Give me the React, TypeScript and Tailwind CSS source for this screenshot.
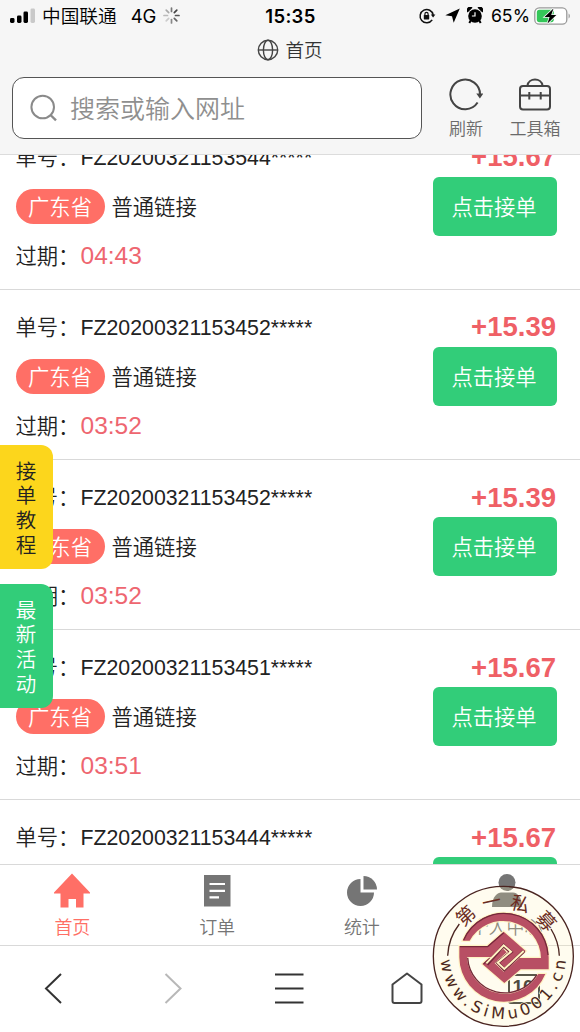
import { ReactNode } from 'react'

const orders = [
  { id: 1, no: 'FZ20200321153544*****', time: '04:43', price: '+15.67' },
  { id: 2, no: 'FZ20200321153452*****', time: '03:52', price: '+15.39' },
  { id: 3, no: 'FZ20200321153452*****', time: '03:52', price: '+15.39' },
  { id: 4, no: 'FZ20200321153451*****', time: '03:51', price: '+15.67' },
  { id: 5, no: 'FZ20200321153444*****', time: '03:44', price: '+15.67' },
]

function StatusBar() {
  return (
    <div className="h-8 grid grid-cols-3 items-center pl-[9px] pr-[8px] text-black font-['Inter','Noto_Sans_CJK_SC',sans-serif]">
      <div className="flex items-center whitespace-nowrap">
        <svg width="28" height="16" viewBox="0 0 28 16">
          <rect x="1" y="10" width="4.5" height="5" rx="1.4" />
          <rect x="8" y="7.5" width="4.5" height="7.5" rx="1.4" />
          <rect x="14.5" y="3.5" width="4.5" height="11.5" rx="1.4" />
          <rect x="21.5" y="0.5" width="4.5" height="14.5" rx="1.4" fill="#c9c9c9" />
        </svg>
        <span className="ml-[5px] pt-[2px] text-[18.7px] font-[350]">中国联通</span>
        <span className="ml-[14px] pt-px text-[18.5px] tracking-[-0.3px]">4G</span>
        <svg className="ml-[7px]" width="17" height="17" viewBox="-8.5 -8.5 17 17" strokeWidth="1.7" strokeLinecap="round">
          <path d="M0 -4V-7.5" stroke="#777" />
          <path d="M2.8 -2.8L5.3 -5.3" stroke="#444" />
          <path d="M4 0H7.5" stroke="#555" />
          <path d="M2.8 2.8L5.3 5.3" stroke="#666" />
          <path d="M0 4V7.5" stroke="#888" />
          <path d="M-2.8 2.8L-5.3 5.3" stroke="#ccc" />
          <path d="M-4 0H-7.5" stroke="#bbb" />
          <path d="M-2.8 -2.8L-5.3 -5.3" stroke="#aaa" />
        </svg>
      </div>
      <div className="pt-px text-center text-[18.5px] font-semibold tracking-[0.3px]">15:35</div>
      <div className="flex items-center justify-end whitespace-nowrap">
        <svg width="18" height="18" viewBox="0 0 18 18" fill="none" stroke="#111" strokeWidth="1.5">
          <path d="M14.2 12.8A6.6 6.6 0 1 1 15.2 8" />
          <path d="M12.8 7.5H17.4L15.1 10.6Z" fill="#111" stroke="none" />
          <rect x="5.8" y="8" width="5.4" height="4.4" rx="0.6" fill="#111" stroke="none" />
          <path d="M6.9 8.2V6.9a1.6 1.6 0 0 1 3.2 0V8.2" strokeWidth="1.2" />
        </svg>
        <svg className="ml-[9px]" width="15" height="15" viewBox="0 0 15 15">
          <path d="M14.8 0.5L0.3 7.3L7 8.2L8.7 14.8Z" />
        </svg>
        <svg className="ml-[7px]" width="16" height="17" viewBox="0 0 16 17">
          <circle cx="8" cy="9" r="6.8" />
          <path d="M0.6 5.5A3.3 3.3 0 0 1 5.5 0.7ZM15.4 5.5A3.3 3.3 0 0 0 10.5 0.7Z" />
          <path d="M4 13L2.3 16M12 13L13.7 16" stroke="#000" strokeWidth="2" />
          <path d="M8 5.2V9H4.9" fill="none" stroke="#fff" strokeWidth="1.2" />
        </svg>
        <span className="ml-[8px] pt-px text-[17.7px]">65%</span>
        <svg className="ml-[4px] mr-px" width="37" height="20" viewBox="0 0 37 20">
          <rect x="0.8" y="1.8" width="32" height="16.4" rx="4.5" fill="#fff" stroke="#999" strokeWidth="1.3" />
          <rect x="2.8" y="3.8" width="17" height="12.4" rx="2.6" fill="#34c759" />
          <path d="M34.5 7.5c2 .8 2 4.2 0 5Z" fill="#aaa" />
          <path d="M19.5 2.5L10.5 11H15.6L13.5 17.5L22.3 9H17.2Z" stroke="#f6f6f6" strokeWidth="1.6" paintOrder="stroke" />
        </svg>
      </div>
    </div>
  )
}

function Header() {
  return (
    <header className="h-[155px] shrink-0 bg-[#f6f6f6] border-b border-[#dcdcdc] flex flex-col">
      <StatusBar />
      <div className="h-9 flex items-center justify-center gap-[6px] text-[#333] text-[18.5px] font-[350]">
        <svg width="22" height="22" viewBox="0 0 22 22" fill="none" stroke="#444" strokeWidth="1.4">
          <circle cx="11" cy="11" r="9.7" />
          <ellipse cx="11" cy="11" rx="4.6" ry="9.7" />
          <path d="M1.3 11H20.7" />
        </svg>
        <span className="pt-px">首页</span>
      </div>
      <div className="flex items-start pl-3 pt-[9px]">
        <div className="w-[410px] h-[62px] rounded-[12px] border-[1.5px] border-[#555] bg-white flex items-center pl-[17px]">
          <svg width="28" height="28" viewBox="0 0 28 28" fill="none" stroke="#8a8a8a" strokeWidth="2">
            <circle cx="12.7" cy="13" r="11.3" />
            <path d="M20.5 21L26 26.3" strokeWidth="2.4" />
          </svg>
          <span className="ml-3 pt-[3px] text-[25px] font-[350] text-[#8f8f8f]">搜索或输入网址</span>
        </div>
        <div className="ml-[24px] w-10 flex flex-col items-center">
          <svg width="34" height="36" viewBox="0 0 34 36" fill="none" stroke="#444" strokeWidth="2">
            <path d="M28.6 25.5A14.8 14.8 0 1 1 31 18" />
            <path d="M27.3 16.500H34.3L30.9 21.6Z" fill="#444" stroke="none" />
          </svg>
          <span className="mt-[4px] text-[17px] leading-[25px] font-[350] text-[#6a6a6a]">刷新</span>
        </div>
        <div className="ml-[22px] w-[54px] flex flex-col items-center">
          <svg width="34" height="36" viewBox="0 0 34 36" fill="none" stroke="#444" strokeWidth="2">
            <rect x="2" y="9" width="30" height="23.5" rx="3" />
            <path d="M9.5 8.5C10.5 0.5 23.5 0.5 24.5 8.5M2 18.6H32M11.3 15V22.4M22.7 15V22.4" />
          </svg>
          <span className="mt-[4px] text-[17px] leading-[25px] font-[350] text-[#6a6a6a] whitespace-nowrap">工具箱</span>
        </div>
      </div>
    </header>
  )
}

function OrderItem({ no, time, price }: { no: string; time: string; price: string }) {
  return (
    <div className="h-[170.1px] shrink-0 border-b border-[#d9d9d9] flex justify-between pl-[15.5px] pr-[23px] pt-[22px]">
      <div className="flex flex-col gap-[17px] text-[21.3px] font-[350] text-[#222]">
        <div className="h-[30px] pt-[3px] flex items-center whitespace-nowrap">
          <span className="w-[65px] shrink-0 pt-px">单号：</span>
          <span>{no}</span>
        </div>
        <div className="h-[35px] flex items-center gap-[7px]">
          <span className="h-[35px] w-[89px] pt-[4px] rounded-full bg-[#ff6f66] text-white flex items-center justify-center">
            广东省
          </span>
          <span className="pt-[4px]">普通链接</span>
        </div>
        <div className="h-[30px] pt-px flex items-center">
          <span className="w-[65px] shrink-0 pt-[3px]">过期：</span>
          <span className="text-[24.5px] text-[#ee6670]">{time}</span>
        </div>
      </div>
      <div className="flex flex-col items-end">
        <div className="h-[30px] pr-px flex items-center text-[27.5px] font-bold text-[#ef6066]">{price}</div>
        <button className="mt-[5px] h-[59px] w-[124px] pt-[4px] pr-[2px] rounded-md bg-[#32cd79] text-white text-[21.3px] font-[350]">
          点击接单
        </button>
      </div>
    </div>
  )
}

function Tab({ label, active, children }: { label: string; active?: boolean; children: ReactNode }) {
  return (
    <div className={active ? 'flex-1 flex flex-col items-center text-[#ff6f66]' : 'flex-1 flex flex-col items-center text-[#757575]'}>
      {children}
      <span className="mt-[4px] text-[18px] leading-[28px] font-[350]">{label}</span>
    </div>
  )
}

function SideTabs() {
  return (
    <div className="absolute left-0 top-[445px] flex flex-col gap-[15px] text-[20.5px] leading-[24.7px] font-[350]">
      <div className="w-[53px] h-[124px] rounded-r-[12px] bg-[#fcd61c] text-[#222] flex flex-col items-center justify-center pt-[4px] pr-px">
        {['接', '单', '教', '程'].map((c) => (
          <span key={c}>{c}</span>
        ))}
      </div>
      <div className="w-[53px] h-[124px] rounded-r-[12px] bg-[#32cd79] text-white flex flex-col items-center justify-center pt-[4px] pr-px">
        {['最', '新', '活', '动'].map((c) => (
          <span key={c}>{c}</span>
        ))}
      </div>
    </div>
  )
}

const sealChars = [
  { c: '第', x: 122, y: 122, r: -43 },
  { c: '一', x: 199, y: 80, r: -13 },
  { c: '私', x: 286, y: 86, r: 15 },
  { c: '募', x: 364, y: 138, r: 48 },
]

function Seal() {
  return (
    <svg className="absolute left-[425px] top-[875px]" width="155" height="157" viewBox="0 0 465 471">
      <circle cx="235" cy="244" r="210" fill="#fff2ae" fillOpacity="0.2" stroke="#4a2420" strokeWidth="4" />
      <path d="M68 242A168 168 0 0 1 103 147M403 242A168 168 0 0 0 378 162" fill="none" stroke="#4a2420" strokeWidth="4" />
      {sealChars.map((s) => (
        <text
          key={s.c}
          transform={`translate(${s.x} ${s.y}) rotate(${s.r})`}
          textAnchor="middle"
          dy="21"
          fontSize="57"
          fill="#6b2c22"
          fontFamily="'Noto Sans CJK SC', sans-serif"
        >
          {s.c}
        </text>
      ))}
      {/* rose emblem, the lower half is the upper one turned round */}
      <path
        d="M113 197A134 134 0 0 1 371 247V283H287L238 324L172 267L237 208L260 230L224 262L238 277L274 249H348A114 114 0 0 0 134 197Z"
        fill="#b84f64"
        stroke="#fff4c4"
        strokeWidth="7"
        paintOrder="stroke"
      />
      <path
        d="M361 297A134 134 0 0 1 103 247V213H187L236 170L302 228L237 286L214 264L250 232L236 217L200 246H126A114 114 0 0 0 340 297Z"
        fill="#b84f64"
        stroke="#fff4c4"
        strokeWidth="7"
        paintOrder="stroke"
      />
      <g fill="none" stroke="#74283a" strokeWidth="4">
        <path d="M116 195A132 132 0 0 1 369 240" />
        <path d="M128 248A112 112 0 0 0 336 299" />
        <path d="M105 215H188L236 173" />
        <path d="M299 229L262 262M176 267L196 249" />
      </g>
      <path d="M186 268L236 212L258 231L218 263L238 284L296 229" fill="none" stroke="#74283a" strokeWidth="10" />
      <path d="M184 265L236 211L258 230L218 263L238 282L296 228" fill="none" stroke="#fff4c4" strokeWidth="6" />
      <path id="seal-arc" d="M47 244A188 188 0 0 0 423 244" fill="none" />
      <text fontSize="48" fill="#4a2622" stroke="#fff9dc" strokeWidth="4" paintOrder="stroke" fontFamily="'DejaVu Sans', sans-serif">
        <textPath href="#seal-arc" startOffset="12" textLength="566">
          www.SiMu001.cn
        </textPath>
      </text>
    </svg>
  )
}

export default function App() {
  return (
    <div className="relative w-[580px] h-[1032px] overflow-hidden bg-white flex flex-col font-['Liberation_Sans','Noto_Sans_CJK_SC',sans-serif]">
      <Header />

      {/* order list */}
      <main className="h-[709px] shrink-0 overflow-hidden">
        <div className="-mt-[35px] flex flex-col">
          {orders.map((o) => (
            <OrderItem key={o.id} no={o.no} time={o.time} price={o.price} />
          ))}
        </div>
      </main>

      {/* site tabs */}
      <nav className="h-[82px] shrink-0 border-y border-[#d9d9d9] flex pt-[7px] pr-px bg-white">
        <Tab label="首页" active>
          <svg width="38" height="38" viewBox="0 0 38 38" fill="currentColor">
            <path d="M19 1.5L37 20.5V21.5H30.5V35.5H23V27H15.5V35.5H7.5V21.5H1V20.5Z" />
          </svg>
        </Tab>
        <Tab label="订单">
          <svg width="38" height="38" viewBox="0 0 38 38" fill="currentColor">
            <path d="M6 3H32.5V34.5H6Z" />
            <path d="M11.5 12H27M11.5 18.8H27M11.5 25.3H21" stroke="#fff" strokeWidth="2.2" />
          </svg>
        </Tab>
        <Tab label="统计">
          <svg width="38" height="38" viewBox="0 0 38 38" fill="currentColor">
            <path d="M17.5 7V20.5H31A13.5 13.5 0 1 1 17.5 7Z" />
            <path d="M20.5 4A13.5 13.5 0 0 1 34 17.5H20.5Z" />
          </svg>
        </Tab>
        <Tab label="个人中心">
          <svg width="38" height="38" viewBox="0 0 38 38" fill="currentColor">
            <circle cx="19" cy="10.5" r="8.5" />
            <path d="M4 35C4 24 10 20.5 13 20.5H25C29 20.5 34 25 34 35Z" />
          </svg>
        </Tab>
      </nav>

      {/* browser toolbar */}
      <footer className="flex-1 flex items-center justify-between bg-white pl-[39px] pr-[37px]">
        <svg width="38" height="38" viewBox="0 0 38 38" fill="none" stroke="#333" strokeWidth="2">
          <path d="M22 4L7 18.5L22 33" />
        </svg>
        <svg width="38" height="38" viewBox="0 0 38 38" fill="none" stroke="#b8b8b8" strokeWidth="2">
          <path d="M9.5 4L24.5 18.5L9.5 33" />
        </svg>
        <svg width="38" height="38" viewBox="0 0 38 38" fill="none" stroke="#333" strokeWidth="2">
          <path d="M3 4.5H31.5M3 18.5H31.5M3 32.5H31.5" />
        </svg>
        <svg width="38" height="38" viewBox="0 0 38 38" fill="none" stroke="#444" strokeWidth="2" strokeLinejoin="round">
          <path d="M18 3.5L32.5 14.5V31Q32.5 33 30.5 33H5.5Q3.5 33 3.5 31V14.5Z" />
        </svg>
        <div className="w-[38px] flex justify-center">
          <div className="w-[32px] h-[30px] border-2 border-[#333] rounded-[3px] flex items-center justify-center pr-[2px] pb-[3px] text-[19px] font-bold text-[#222]">
            10
          </div>
        </div>
      </footer>

      <SideTabs />
      <Seal />
    </div>
  )
}
